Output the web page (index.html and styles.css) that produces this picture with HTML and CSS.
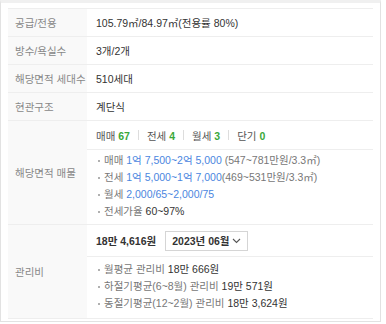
FILE: index.html
```html
<!DOCTYPE html>
<html lang="ko">
<head>
<meta charset="utf-8">
<link rel="stylesheet" href="styles.css">
</head>
<body>
<div class="card">
  <div class="table">
    <div class="row">
      <div class="th">공급/전용</div>
      <div class="td">105.79㎡/84.97㎡(전용률 80%)</div>
    </div>
    <div class="row">
      <div class="th">방수/욕실수</div>
      <div class="td">3개/2개</div>
    </div>
    <div class="row">
      <div class="th">해당면적 세대수</div>
      <div class="td">510세대</div>
    </div>
    <div class="row">
      <div class="th">현관구조</div>
      <div class="td">계단식</div>
    </div>
    <div class="row">
      <div class="th">해당면적 매물</div>
      <div class="td split">
        <div class="sub counts">
          <span>매매 <b class="num">67</b></span><i class="bar"></i>
          <span>전세 <b class="num">4</b></span><i class="bar"></i>
          <span>월세 <b class="num">3</b></span><i class="bar"></i>
          <span>단기 <b class="num">0</b></span>
        </div>
        <ul class="sub list deals">
          <li>매매 <span class="link">1억 7,500~2억 5,000</span> (547~781만원/3.3㎡)</li>
          <li>전세 <span class="link">1억 5,000~1억 7,000</span>(469~531만원/3.3㎡)</li>
          <li>월세 <span class="link">2,000/65~2,000/75</span></li>
          <li>전세가율 <span class="dark">60~97%</span></li>
        </ul>
      </div>
    </div>
    <div class="row">
      <div class="th">관리비</div>
      <div class="td split">
        <div class="sub fee">
          <strong>18만 4,616원</strong>
          <button class="select" type="button">2023년 06월
            <svg width="9" height="6" viewBox="0 0 9 6"><path d="M1 1l3.5 3.5L8 1" fill="none" stroke="#555" stroke-width="1.1"/></svg>
          </button>
        </div>
        <ul class="sub list fees">
          <li>월평균 관리비 <span class="dark">18만 666원</span></li>
          <li>하절기평균(6~8월) 관리비 <span class="dark">19만 571원</span></li>
          <li>동절기평균(12~2월) 관리비 <span class="dark">18만 3,624원</span></li>
        </ul>
      </div>
    </div>
  </div>
</div>
</body>
</html>
```

FILE: styles.css
```css
* { box-sizing: border-box; }
html, body { margin: 0; padding: 0; background: #fff; }
body {
  font-family: "Liberation Sans", "Noto Sans CJK KR", sans-serif;
  font-size: 10.5px;
  color: #333;
  width: 386px;
  height: 324px;
  overflow: hidden;
}
.card {
  width: 381px;
  height: 322px;
  border: 1px solid #e2e2e2;
  border-top: 3px solid #f0f0f0;
  padding: 5px 7px 5px 7px;
}
.table {
  border-top: 1px solid #eeeeee;
}
.row {
  display: grid;
  grid-template-columns: 79px 1fr;
  border-bottom: 1px solid #eeeeee;
}
.th {
  background: #f9f9f9;
  color: #888;
  padding-left: 7px;
  display: flex;
  align-items: center;
  min-height: 27px;
}
.td {
  padding-left: 9px;
  display: flex;
  align-items: center;
  min-height: 27px;
}
.td.split {
  padding-left: 0;
  flex-direction: column;
  align-items: stretch;
}
.sub { padding-left: 9px; }
.counts {
  display: flex;
  align-items: center;
  height: 29px;
  border-bottom: 1px solid #eeeeee;
  color: #555;
}
.num { color: #3aa83a; font-weight: bold; }
.bar {
  display: inline-block;
  width: 1px;
  height: 10px;
  background: #dddddd;
  margin: 0 8px;
}
.list {
  list-style: none;
  margin: 0;
  color: #777;
}
.deals { padding-top: 2px; padding-bottom: 4px; }
.fees { padding-top: 4px; padding-bottom: 6px; }
.list li {
  line-height: 17px;
  position: relative;
  padding-left: 8px;
}
.list li::before {
  content: "";
  position: absolute;
  left: 2px;
  top: 8px;
  width: 2px;
  height: 2px;
  background: #b0b0b0;
}
.link { color: #4b86e0; }
.dark { color: #333; }
.fee {
  display: flex;
  align-items: center;
  gap: 9px;
  height: 32px;
  border-bottom: 1px solid #eeeeee;
}
.fee strong { font-weight: bold; color: #333; }
.select {
  font: inherit;
  font-weight: bold;
  color: #333;
  background: #fff;
  border: 1px solid #d5d5d5;
  height: 20px;
  padding: 0 6px;
  display: flex;
  align-items: center;
  gap: 3px;
}
```
